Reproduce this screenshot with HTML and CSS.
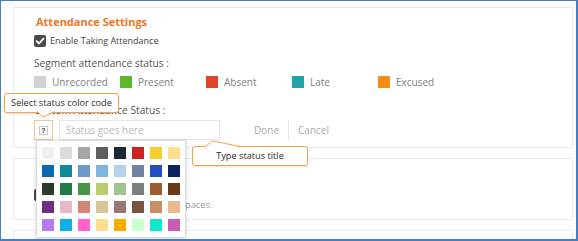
FILE: index.html
```html
<!DOCTYPE html>
<html lang="en">
<head>
  <meta charset="UTF-8" />
  <title>Attendance Settings</title>
  <link rel="stylesheet" href="styles.css">
</head>
<body>
  <div class="frame">
    <section class="panel">
      <h2 class="panel-title">Attendance Settings</h2>
      <label class="check-row">
        <span class="checkbox">
          <svg width="10" height="10" viewBox="0 0 10 10"><path d="M1.6 5.2 L4 7.5 L8.5 2.6" fill="none" stroke="#fff" stroke-width="1.8" stroke-linecap="round" stroke-linejoin="round"/></svg>
        </span>
        Enable Taking Attendance
      </label>

      <p class="field-label">Segment attendance status :</p>
      <ul class="legend">
        <li><span class="swatch" style="background:#d2d2d2"></span>Unrecorded</li>
        <li><span class="swatch" style="background:#5cb82a"></span>Present</li>
        <li><span class="swatch" style="background:#e2452a"></span>Absent</li>
        <li><span class="swatch" style="background:#1fa4ad"></span>Late</li>
        <li><span class="swatch" style="background:#ff8a12"></span>Excused</li>
      </ul>

      <p class="field-label custom-label">Custom Attendance Status :</p>
      <div class="status-row">
        <button class="color-btn"><span class="color-q">?</span></button>
        <input class="status-input" type="text" placeholder="Status goes here">
        <button class="link-btn">Done</button>
        <span class="sep"></span>
        <button class="link-btn">Cancel</button>
      </div>
    </section>

    <section class="panel second">
      <label class="check-row">
        <span class="checkbox"></span>
        Allow Absence Reason
      </label>
      <p class="hint">Separate each with a comma, no spaces.</p>
    </section>

    <section class="panel third"></section>

    <!-- colour picker popup -->
    <div class="picker">
      <span style="background:#f0f0f0"></span>
      <span style="background:#dcdcdc"></span>
      <span style="background:#a6a6a6"></span>
      <span style="background:#5e5e5e"></span>
      <span style="background:#1c2833"></span>
      <span style="background:#cb2420"></span>
      <span style="background:#f8cd2e"></span>
      <span style="background:#fddf8e"></span>

      <span style="background:#0e6aae"></span>
      <span style="background:#0e8b96"></span>
      <span style="background:#6d99c9"></span>
      <span style="background:#80b5dc"></span>
      <span style="background:#b6d4e8"></span>
      <span style="background:#6f84a0"></span>
      <span style="background:#1f50be"></span>
      <span style="background:#0b2363"></span>

      <span style="background:#283b2f"></span>
      <span style="background:#1d7b44"></span>
      <span style="background:#46964a"></span>
      <span style="background:#b9cc6f"></span>
      <span style="background:#a1c38c"></span>
      <span style="background:#7e7e7e"></span>
      <span style="background:#a05a2f"></span>
      <span style="background:#6a3a18"></span>

      <span style="background:#6e2d80"></span>
      <span style="background:#e8b8c8"></span>
      <span style="background:#d8847a"></span>
      <span style="background:#d9c49d"></span>
      <span style="background:#987775"></span>
      <span style="background:#7a5641"></span>
      <span style="background:#c98f63"></span>
      <span style="background:#ebb98b"></span>

      <span style="background:#b67bf5"></span>
      <span style="background:#0cb1ea"></span>
      <span style="background:#ff63c9"></span>
      <span style="background:#fddf8d"></span>
      <span style="background:#ffab00"></span>
      <span style="background:#c8ffcd"></span>
      <span style="background:#12e8cd"></span>
      <span style="background:#c95db6"></span>
    </div>

    <!-- callouts -->
    <div class="callout callout-color">
      Select status color code
      <svg class="tail tail-down" width="20" height="8" viewBox="0 0 20 8">
        <polygon points="0,0 6,6 18,0" fill="#fff"/>
        <polyline points="0,0.5 6,6 18,0.5" fill="none" stroke="#f6a04c" stroke-width="1"/>
      </svg>
    </div>
    <div class="callout callout-title">
      Type status title
      <svg class="tail tail-up" width="36" height="7" viewBox="0 0 36 7">
        <polygon points="0,7 8,1 35,7" fill="#fff"/>
        <polyline points="0,6.5 8,1 35,6.5" fill="none" stroke="#f6a04c" stroke-width="1"/>
      </svg>
    </div>
  </div>
</body>
</html>
```

FILE: styles.css
```css
* { box-sizing: border-box; }
body {
  margin: 0;
  font-family: 'Open Sans', 'Noto Sans', sans-serif;
  background: #fff;
  color: #555;
}
.frame {
  position: relative;
  width: 578px;
  height: 241px;
  overflow: hidden;
  border-style: solid;
  border-color: #4a7dbd;
  border-width: 1px 2px 2px 1px;
  padding: 6px 3px 0 12px;
}
.panel {
  border: 1px solid #ebebeb;
  background: #fff;
  padding: 6px 20px 7px;
  margin-bottom: 10px;
}
.panel-title {
  margin: 0 0 0 2px;
  font-size: 11px;
  line-height: 16px;
  font-weight: 700;
  color: #e8772c;
}
.check-row {
  display: flex;
  align-items: center;
  gap: 4px;
  margin-top: 4px;
  height: 13px;
  font-size: 9px;
  color: #444;
}
.checkbox {
  width: 12px;
  height: 12px;
  border-radius: 2px;
  background: #4a4a4a;
  display: flex;
  align-items: center;
  justify-content: center;
}
.field-label {
  margin: 8px 0 0;
  font-size: 10.2px;
  line-height: 16px;
  color: #555;
}
.legend {
  list-style: none;
  margin: 4px 0 0;
  padding: 0;
  display: flex;
  height: 14px;
}
.legend li {
  width: 86px;
  display: flex;
  align-items: center;
  gap: 6px;
  font-size: 10px;
  color: #808080;
}
.swatch {
  width: 12px;
  height: 12px;
  flex: none;
}
.custom-label {
  margin-top: 13px;
}
.status-row {
  display: flex;
  align-items: stretch;
  height: 20px;
  margin-top: 2px;
}
.color-btn {
  width: 19px;
  padding: 0;
  border: 1px solid #f7c38f;
  background: #fff;
  display: flex;
  align-items: center;
  justify-content: center;
}
.color-q {
  width: 9px;
  height: 9px;
  border: 1px solid #c8c8c8;
  font-size: 7px;
  line-height: 7px;
  font-weight: 700;
  color: #333;
  text-align: center;
}
.status-input {
  width: 161px;
  margin-left: 6px;
  margin-right: 25px;
  border: 1px solid #e6e6e6;
  padding: 0 6px;
  font-family: inherit;
  font-size: 10px;
  color: #555;
}
.status-input::placeholder { color: #b9b9b9; }
.link-btn {
  border: none;
  background: transparent;
  padding: 0 9px;
  font-family: inherit;
  font-size: 10px;
  color: #aaa;
}
.sep {
  width: 1px;
  background: #e6e6e6;
}
.second {
  height: 62px;
  padding-top: 25px;
}
.hint {
  margin: -2px 0 0;
  padding-left: 3px;
  font-size: 9.3px;
  line-height: 12px;
  color: #999;
}
.third {
  height: 40px;
}
.picker {
  position: absolute;
  left: 35px;
  top: 139px;
  width: 150px;
  height: 98px;
  background: #fff;
  border: 1px solid #dedede;
  box-shadow: 0 1px 4px rgba(0, 0, 0, 0.2);
  padding: 6px 5px;
  display: grid;
  grid-template-columns: repeat(8, 12px);
  grid-auto-rows: 12px;
  gap: 6px;
}
.callout {
  position: absolute;
  height: 20px;
  background: #fff;
  border: 1px solid #f6a04c;
  border-radius: 3px;
  box-shadow: 0 1px 2px rgba(0, 0, 0, 0.12);
  font-size: 9.2px;
  line-height: 18px;
  color: #2a2a2a;
  text-align: center;
}
.callout-color {
  left: 3px;
  top: 92px;
  width: 115px;
}
.callout-title {
  left: 191px;
  top: 145px;
  width: 116px;
}
.tail {
  position: absolute;
  overflow: visible;
}
.tail-down {
  left: 32px;
  bottom: -7px;
}
.tail-up {
  left: 12px;
  top: -7px;
}
```
